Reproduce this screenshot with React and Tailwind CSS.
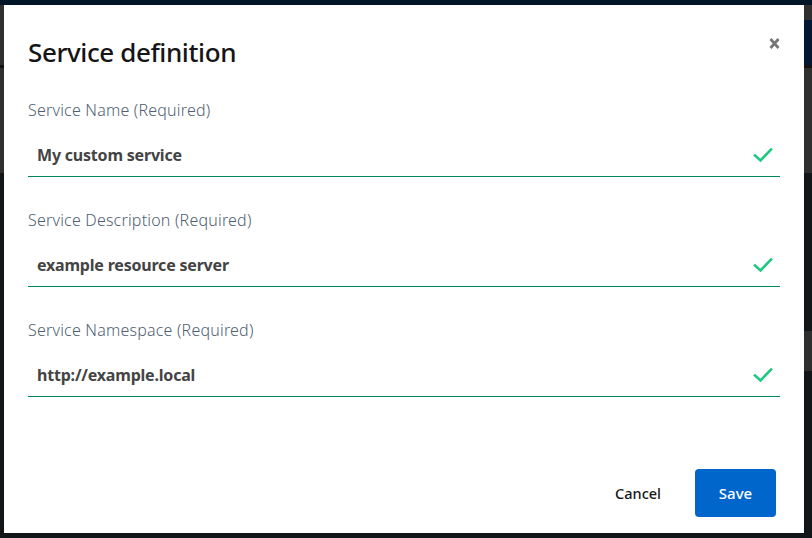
import React from "react";

const font = { fontFamily: '"Noto Sans", "Open Sans", sans-serif' };

function Check() {
  return (
    <svg width="20" height="16" viewBox="0 0 20 16" className="shrink-0">
      <path d="M2 8.5 L7.5 13.5 L18 2.5" fill="none" stroke="#1ec97f" strokeWidth="2.6" strokeLinecap="square" />
    </svg>
  );
}

function Field({ label, value }) {
  return (
    <div className="flex flex-col">
      <div className="text-[16px] leading-[20px] text-[#4f5f73] font-light tracking-[0.2px]">{label}</div>
      <div className="mt-[25px] flex items-center justify-between pl-[9px] pr-[7px] h-[20px]">
        <span className="text-[16px] font-bold text-[#444444] tracking-[-0.2px]">{value}</span>
        <Check />
      </div>
      <div className="mt-[11px] h-px bg-[#00875a]" />
    </div>
  );
}

export default function App() {
  return (
    <div className="relative w-[812px] h-[538px] overflow-hidden bg-[#121619]" style={font}>
      <div className="h-[5px] bg-[#011428]" />
      <div className="h-[168px] bg-[#2f2f2f] flex flex-col">
        <div className="h-[60px] flex justify-end pt-[15px]">
          <div className="w-[12px] h-[48px] rounded-l-[6px] bg-[#011733]" />
        </div>
        <div className="h-[3px] bg-[#121212]" />
      </div>
      <div className="mt-[158px] flex justify-end">
        <div className="w-[10px] h-[40px] bg-[#2e2e2e]" />
      </div>

      <div className="absolute left-[4px] top-[5px] w-[800px] h-[528px] bg-white flex flex-col px-[24px]">
        <div className="flex items-start justify-between pt-[30px]">
          <h1 className="text-[26px] leading-[34px] font-medium text-[#151515] tracking-[-0.4px]">Service definition</h1>
          <svg width="11" height="13" viewBox="0 0 11 13" className="mt-[2px] mr-[0px]">
            <path d="M1.5 2 L9.5 11 M9.5 2 L1.5 11" stroke="#777777" strokeWidth="2.8" strokeLinecap="butt" />
          </svg>
        </div>
        <div className="mt-[31px] flex flex-col gap-[33px]">
          <Field label="Service Name (Required)" value="My custom service" />
          <Field label="Service Description (Required)" value="example resource server" />
          <Field label="Service Namespace (Required)" value="http://example.local" />
        </div>
        <div className="mt-auto mb-[16px] mr-[4px] flex items-center justify-end gap-[34px]">
          <button className="text-[14.5px] font-medium text-[#151515] mt-[2px]">Cancel</button>
          <button className="w-[81px] h-[48px] rounded-[4px] bg-[#0066cc] text-white text-[15px] font-medium">Save</button>
        </div>
      </div>
    </div>
  );
}
